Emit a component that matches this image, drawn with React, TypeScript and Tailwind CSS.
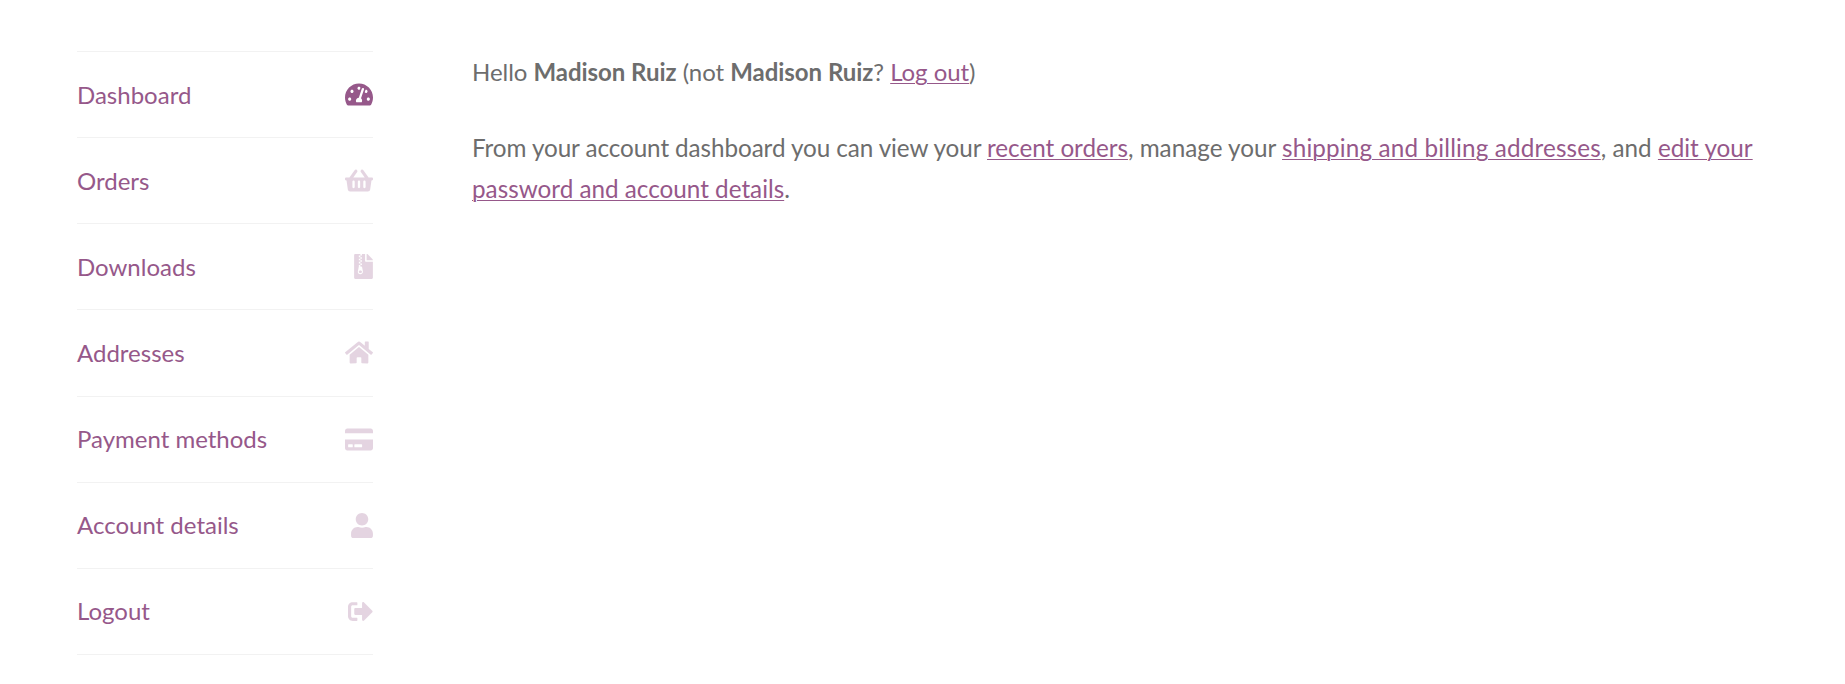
import type { IconType } from "react-icons";
import {
  FaTachometerAlt,
  FaShoppingBasket,
  FaFileArchive,
  FaHome,
  FaCreditCard,
  FaUser,
  FaSignOutAlt,
} from "react-icons/fa";

const navItems: { label: string; icon: IconType; iconClass: string }[] = [
  { label: "Dashboard", icon: FaTachometerAlt, iconClass: "h-[25px] w-[28px]" },
  { label: "Orders", icon: FaShoppingBasket, iconClass: "h-[25px] w-[28px] opacity-25" },
  { label: "Downloads", icon: FaFileArchive, iconClass: "h-[25px] w-[19px] opacity-25" },
  { label: "Addresses", icon: FaHome, iconClass: "h-[25px] w-[28px] opacity-25" },
  { label: "Payment methods", icon: FaCreditCard, iconClass: "h-[25px] w-[28px] opacity-25" },
  { label: "Account details", icon: FaUser, iconClass: "h-[25px] w-[22px] opacity-25" },
  { label: "Logout", icon: FaSignOutAlt, iconClass: "h-[25px] w-[25px] opacity-25" },
];

function TextLink({ children, className = "" }: { children: React.ReactNode; className?: string }) {
  return (
    <a href="#" className={`text-[#96588a] underline decoration-1 underline-offset-2 ${className}`}>
      {children}
    </a>
  );
}

export default function App() {
  return (
    <div className="flex h-[684px] overflow-hidden bg-white pt-[51px] pl-[77px] pr-[77px] font-['Lato',sans-serif] text-[24px] leading-[41px] text-[#6d6d6d]">
      <nav className="w-[296px] shrink-0">
        <ul className="border-t border-[#f2f2f2]">
          {navItems.map((item) => {
            const Icon = item.icon;
            return (
              <li
                key={item.label}
                className="flex h-[86.14px] items-center justify-between border-b border-[#f2f2f2] text-[#96588a]"
              >
                <a href="#" className="mb-[1px]">{item.label}</a>
                <Icon className={item.iconClass} />
              </li>
            );
          })}
        </ul>
      </nav>
      <main className="ml-[99px] min-w-0 flex-1">
        <p className="mb-[35px] tracking-[-0.04px]">
          Hello <strong className="font-bold">Madison Ruiz</strong> (not{" "}
          <strong className="font-bold">Madison Ruiz</strong>?{" "}
          <TextLink>Log out</TextLink>)
        </p>
        <p className="text-[24.25px]">
          <span className="tracking-[-0.08px]">From your account dashboard you can view your </span>
          <TextLink className="tracking-[-0.03px]">recent orders</TextLink>, manage your{" "}
          <TextLink className="tracking-[0.15px]">shipping and billing addresses</TextLink>, and{" "}
          <TextLink>edit your password and account details</TextLink>.
        </p>
      </main>
    </div>
  );
}
